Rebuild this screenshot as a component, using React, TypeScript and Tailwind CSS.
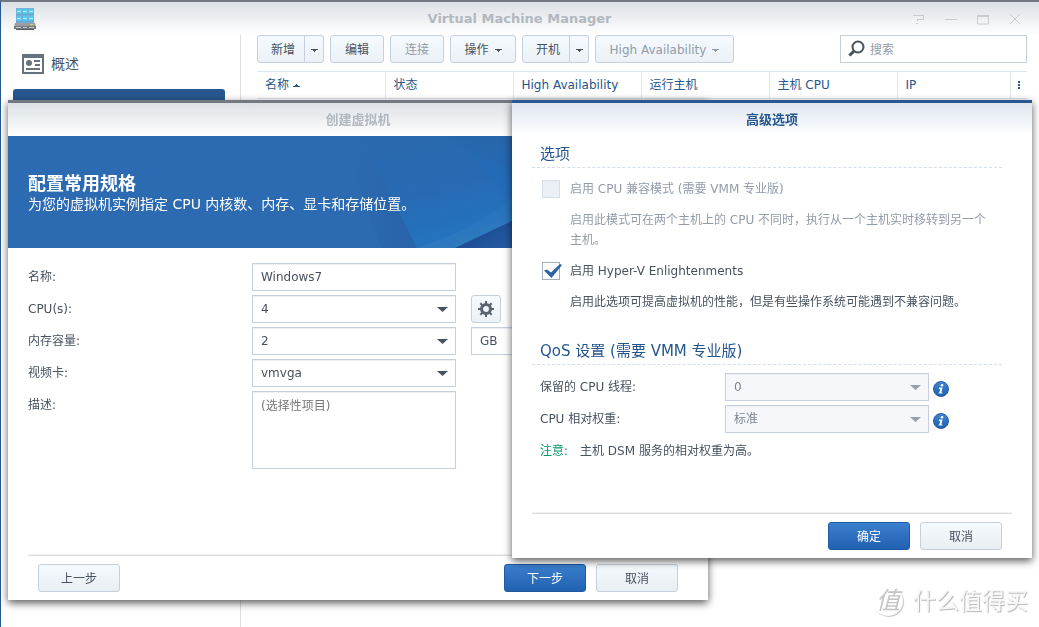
import { useState } from 'react';
import type { ReactNode } from 'react';

const columns = ['名称', '状态', 'High Availability', '运行主机', '主机 CPU', 'IP'];

const toolButton =
  'h-7 rounded-[3px] border border-[#c6d0dd] bg-linear-to-b from-[#f5fafe] to-[#ebf1f6] pt-0.5 text-[#47525f]';
const disabledButton =
  'h-7 rounded-[3px] border border-[#c6d0dd] bg-linear-to-b from-[#f5fafe] to-[#ebf1f6] pt-0.5 text-[#929ca9]';
const field =
  'h-7 w-full appearance-none border border-[#c6d0dd] bg-white px-2 text-[#47525f] shadow-[inset_0_1px_0_#edf1f5] outline-none';

function Caret({ up = false }: { up?: boolean }) {
  return (
    <svg width="7" height="3" viewBox="0 0 7 3" fill="currentColor" shapeRendering="crispEdges" aria-hidden="true">
      <path d={up ? 'M3 0h1v1h1v1h2v1H0V2h2V1h1z' : 'M0 0h7v1H5v1H4v1H3V2H2V1H0z'} />
    </svg>
  );
}

function SplitButton({ label }: { label: string }) {
  return (
    <div className="flex">
      <button type="button" className={`${toolButton} w-12 rounded-r-none pl-1`}>{label}</button>
      <button
        type="button"
        aria-label={`${label}菜单`}
        className={`${toolButton} flex w-[19px] items-center justify-center rounded-l-none border-l-0`}
      >
        <Caret />
      </button>
    </div>
  );
}

function Dropdown({ id, value, disabled = false }: { id: string; value: string; disabled?: boolean }) {
  return (
    <div className="relative w-[204px]">
      <select
        id={id}
        defaultValue={value}
        disabled={disabled}
        className={`${field} block disabled:bg-[#f5f7fa] disabled:text-[#7d858e] disabled:opacity-100`}
      >
        <option>{value}</option>
      </select>
      <svg
        width="11"
        height="5"
        viewBox="0 0 11 5"
        aria-hidden="true"
        className={`pointer-events-none absolute top-3 right-2 ${disabled ? 'text-[#98a0aa]' : 'text-[#47525f]'}`}
      >
        <path d="M0 0h11L5.5 5z" fill="currentColor" />
      </svg>
    </div>
  );
}

function CheckBox({ id, label, defaultChecked = false, disabled = false }: {
  id: string;
  label: string;
  defaultChecked?: boolean;
  disabled?: boolean;
}) {
  const [checked, setChecked] = useState(defaultChecked);
  return (
    <div className="flex items-center gap-2.5">
      <div className="relative size-[18px]">
        <input
          id={id}
          type="checkbox"
          checked={checked}
          disabled={disabled}
          onChange={e => setChecked(e.target.checked)}
          className="block size-[18px] appearance-none border border-[#a4afbc] bg-white disabled:border-[#d5dfe9] disabled:bg-[#eaf0f5]"
        />
        {checked && (
          <svg width="20" height="18" viewBox="0 0 20 18" aria-hidden="true" className="pointer-events-none absolute top-0 left-0">
            <path d="M2 8.5 5 7.5 9 10.5 18 2 20 3 9.5 16z" fill="#2a63a8" />
          </svg>
        )}
      </div>
      <label htmlFor={id} className={disabled ? 'text-[#929ca9]' : 'text-[#47525f]'}>{label}</label>
    </div>
  );
}

function InfoButton({ label }: { label: string }) {
  return (
    <button
      type="button"
      aria-label={label}
      className="mt-1 ml-1 flex size-4 items-center justify-center rounded-full border border-[#205ca6] bg-linear-to-b from-[#3e84d2] to-[#2060b0]"
    >
      <svg width="6" height="10" viewBox="0 0 6 10" fill="#fff" aria-hidden="true">
        <circle cx="4" cy="1.3" r="1.3" />
        <path d="M1 3.5h3.6L3.4 8.4h1.2L4.3 9.5H.6L.9 8.4h.5l.8-3.7H.8z" />
      </svg>
    </button>
  );
}

function FooterButton({ children, primary = false }: { children: ReactNode; primary?: boolean }) {
  return (
    <button
      type="button"
      className={
        primary
          ? 'h-7 w-[82px] rounded-[3px] border border-[#1f5aa3] bg-linear-to-b from-[#3b7fcd] to-[#2161b1] pt-0.5 text-white'
          : 'h-7 w-[82px] rounded-[3px] border border-[#c6d0dd] bg-linear-to-b from-[#f5fafe] to-[#e8eef2] pt-0.5 text-[#47525f]'
      }
    >
      {children}
    </button>
  );
}

function Section({ title }: { title: string }) {
  return (
    <h3 className="h-7 border-b border-dashed border-[#d3dee9] px-2 text-[15px] leading-7 text-[#24568f]">
      {title}
    </h3>
  );
}

function BannerArt() {
  return (
    <svg
      viewBox="0 0 700 112"
      preserveAspectRatio="xMinYMin slice"
      aria-hidden="true"
      className="absolute inset-0 size-full"
    >
      <defs>
        <linearGradient id="fold" x1="0" x2="1" y1="0" y2="0">
          <stop offset="0" stopColor="#2c6bb2" />
          <stop offset="1" stopColor="#2963a9" />
        </linearGradient>
        <linearGradient id="sheet" gradientUnits="userSpaceOnUse" x1="400" x2="430" y1="0" y2="112">
          <stop offset="0" stopColor="#2a68af" />
          <stop offset="0.5" stopColor="#276ab3" />
          <stop offset="1" stopColor="#2474c0" />
        </linearGradient>
        <linearGradient id="corner" gradientUnits="userSpaceOnUse" x1="500" x2="480" y1="0" y2="65">
          <stop offset="0" stopColor="#2964a9" />
          <stop offset="1" stopColor="#1f70bf" />
        </linearGradient>
        <linearGradient id="glow" gradientUnits="userSpaceOnUse" x1="470" x2="480" y1="60" y2="100">
          <stop offset="0" stopColor="#2b77be" stopOpacity="0" />
          <stop offset="1" stopColor="#2f79be" />
        </linearGradient>
        <linearGradient id="deep" gradientUnits="userSpaceOnUse" x1="470" x2="490" y1="90" y2="120">
          <stop offset="0" stopColor="#1c4991" />
          <stop offset="1" stopColor="#255da3" />
        </linearGradient>
      </defs>
      <path d="M0 0h700v112H0z" fill="#2c6bb2" />
      <path d="M333 0h20l56 112h-36z" fill="url(#fold)" />
      <path d="M353 0h347v112H409z" fill="url(#sheet)" />
      <path d="M444 0h256v112H564L504 62z" fill="url(#corner)" />
      <path d="M409 112Q470 92 504 62l60 50z" fill="url(#glow)" />
      <path d="M447 112 504 85 560 58H700v54z" fill="url(#deep)" />
    </svg>
  );
}

function AppIcon() {
  return (
    <svg width="22" height="24" viewBox="0 0 22 24" aria-hidden="true">
      <path d="M2 1h18v16H2z" fill="#70b4dc" />
      {[3, 9, 15].map(x =>
        [2, 9].map(y => (
          <g key={`${x}-${y}`}>
            <rect x={x} y={y} width="4" height="5" fill="#59c9ec" />
            <path d={`M${x} ${y + 2.5}h4`} stroke="#a6f1f8" />
          </g>
        ))
      )}
      <path d="M2 7.5h18M2 14.5h18" stroke="#5fa3d0" />
      <path d="M1 16h20l1 4H0z" fill="#9b9da0" />
      <path d="M0 19h22v3H0z" fill="#777b80" />
      <path d="M2 20.5h5m2 0h4m2 0h5" stroke="#c5c8ca" />
      <path d="M2 22h18v1H2z" fill="#555a60" />
      <path d="M16 17.5h3" stroke="#d4d27d" />
    </svg>
  );
}

function TitleBarControls() {
  const shapes = [
    { name: '帮助', d: 'M0 3.5h11M10.5 3v4.5M11 7.5H4M4.5 7v2M3 11.5h2' },
    { name: '最小化', d: 'M0 7.5h12' },
    { name: '最大化', d: 'M.5 3v9h11V3M0 3.5h12M0 4.5h12' },
    { name: '关闭', d: 'M1 2l10 10M11 2 1 12' },
  ];
  return (
    <div className="flex flex-1 justify-end gap-5 pr-[18px]">
      {shapes.map(s => (
        <button key={s.name} type="button" aria-label={s.name}>
          <svg width="12" height="14" viewBox="0 0 12 14" fill="none" stroke="#c8cbd0">
            <path d={s.d} />
          </svg>
        </button>
      ))}
    </div>
  );
}

function WizardDialog() {
  return (
    <section
      role="dialog"
      aria-labelledby="wizard-title"
      className="absolute top-[100px] left-2 flex h-[500px] w-[700px] flex-col border-t-3 border-[#737881] bg-white shadow-[0_3px_8px_rgba(0,0,0,0.65)]"
    >
      <h2
        id="wizard-title"
        className="h-[33px] bg-linear-to-b from-[#dce0e5] to-white pt-px text-center text-[13px] leading-8 font-bold text-[#b2b8c0]"
      >
        创建虚拟机
      </h2>
      <div className="relative flex h-28 flex-col justify-center bg-[#2c6bb2] px-5 pt-1 text-white">
        <BannerArt />
        <div className="relative">
          <p className="text-lg leading-5 font-bold">配置常用规格</p>
          <p className="text-sm leading-5">为您的虚拟机实例指定 CPU 内核数、内存、显卡和存储位置。</p>
        </div>
      </div>
      <form className="flex flex-1 flex-col gap-1 px-5 pt-[15px]">
        <div className="flex items-center">
          <label htmlFor="vm-name" className="w-56">名称:</label>
          <div className="w-[204px]">
            <input id="vm-name" type="text" defaultValue="Windows7" className={field} />
          </div>
        </div>
        <div className="flex items-center">
          <label htmlFor="vm-cpu" className="w-56">CPU(s):</label>
          <Dropdown id="vm-cpu" value="4" />
          <button
            type="button"
            aria-label="高级选项"
            className="ml-[15px] flex h-7 w-[30px] items-center justify-center rounded-[3px] border border-[#c6d0dd] bg-linear-to-b from-[#f5fafe] to-[#ebf1f6]"
          >
            <svg width="16" height="16" viewBox="0 0 16 16" fill="none" stroke="#59646f" aria-hidden="true">
              <circle cx="8" cy="8" r="4.5" strokeWidth="3" />
              <path
                d="M8 0v3M8 13v3M0 8h3M13 8h3M2.3 2.3l2 2M11.7 11.7l2 2M13.7 2.3l-2 2M4.3 11.7l-2 2"
                strokeWidth="2"
              />
            </svg>
          </button>
        </div>
        <div className="flex items-center">
          <label htmlFor="vm-memory" className="w-56">内存容量:</label>
          <Dropdown id="vm-memory" value="2" />
          <div className="ml-[15px] w-20">
            <select aria-label="单位" className={`${field} block`}>
              <option>GB</option>
            </select>
          </div>
        </div>
        <div className="flex items-center">
          <label htmlFor="vm-video" className="w-56">视频卡:</label>
          <Dropdown id="vm-video" value="vmvga" />
        </div>
        <div className="flex items-start">
          <label htmlFor="vm-desc" className="w-56 leading-7">描述:</label>
          <textarea
            id="vm-desc"
            placeholder="(选择性项目)"
            className="h-[78px] w-[204px] resize-none border border-[#c6d0dd] px-2 py-1 leading-5 shadow-[inset_0_1px_0_#edf1f5] outline-none placeholder:text-[#777]"
          />
        </div>
      </form>
      <footer className="mx-5 flex gap-2.5 border-t border-[#d9dbde] px-2.5 py-2 shadow-[0_-1px_0_#f1f2f3]">
        <FooterButton>上一步</FooterButton>
        <div className="flex-1" />
        <FooterButton primary>下一步</FooterButton>
        <FooterButton>取消</FooterButton>
      </footer>
    </section>
  );
}

function AdvancedDialog() {
  return (
    <section
      role="dialog"
      aria-labelledby="advanced-title"
      className="absolute top-[100px] right-[7px] flex h-[458px] w-[520px] flex-col border-t-3 border-[#28588f] bg-white shadow-[0_3px_8px_rgba(0,0,0,0.65)]"
    >
      <h2
        id="advanced-title"
        className="h-[33px] bg-linear-to-b from-[#dfe6f0] to-white pt-px text-center text-[13px] leading-8 font-bold text-[#24568f]"
      >
        高级选项
      </h2>
      <form className="flex flex-1 flex-col pt-1 pr-[30px] pl-5">
        <Section title="选项" />
        <div className="px-2.5 pt-3">
          <CheckBox id="cpu-compat" label="启用 CPU 兼容模式 (需要 VMM 专业版)" disabled />
          <p className="mt-3 pl-7 leading-5 text-[#929ca9]">
            启用此模式可在两个主机上的 CPU 不同时，执行从一个主机实时移转到另一个主机。
          </p>
          <div className="mt-3">
            <CheckBox id="hyper-v" label="启用 Hyper-V Enlightenments" defaultChecked />
          </div>
          <p className="mt-3 mb-[25px] pl-7 leading-5">启用此选项可提高虚拟机的性能，但是有些操作系统可能遇到不兼容问题。</p>
        </div>
        <Section title="QoS 设置 (需要 VMM 专业版)" />
        <div className="mt-2 flex flex-col gap-1 pl-2">
          <div className="flex items-center">
            <label htmlFor="cpu-threads" className="w-[185px]">保留的 CPU 线程:</label>
            <Dropdown id="cpu-threads" value="0" disabled />
            <InfoButton label="CPU 线程说明" />
          </div>
          <div className="flex items-center">
            <label htmlFor="cpu-weight" className="w-[185px]">CPU 相对权重:</label>
            <Dropdown id="cpu-weight" value="标准" disabled />
            <InfoButton label="CPU 权重说明" />
          </div>
          <p className="flex gap-3 leading-7">
            <span className="text-[#00966b]">注意:</span>
            <span>主机 DSM 服务的相对权重为高。</span>
          </p>
        </div>
      </form>
      <footer className="mx-5 flex justify-end gap-2.5 border-t border-[#d9dbde] px-2.5 py-2 shadow-[0_-1px_0_#f1f2f3]">
        <FooterButton primary>确定</FooterButton>
        <FooterButton>取消</FooterButton>
      </footer>
    </section>
  );
}

export default function App() {
  return (
    <div className="relative flex h-screen flex-col overflow-hidden border-t-2 border-l border-t-[#737881] border-l-[#28588f] bg-white font-['DejaVu_Sans','Noto_Sans_CJK_SC',sans-serif] text-xs text-[#47525f]">
      <header className="flex h-[33px] shrink-0 items-center bg-linear-to-b from-[#dce0e5] to-white">
        <div className="flex-1 pl-[13px]">
          <AppIcon />
        </div>
        <h1 className="pl-1 text-[13px] font-bold text-[#b2b8c0]">Virtual Machine Manager</h1>
        <TitleBarControls />
      </header>

      <div className="flex flex-1">
        <nav className="w-60 border-r border-[#dcdfe2] pt-4 pr-[15px] pl-3">
          <a href="#overview" className="flex h-[26px] items-center gap-[7px] pl-[9px] text-sm">
            <svg width="22" height="20" viewBox="0 0 22 20" aria-hidden="true">
              <path d="M0 0h22v20H0z" fill="#68717e" />
              <path d="M2 4h18v14H2z" fill="#fff" />
              <circle cx="7" cy="9" r="3" fill="#68717e" />
              <path d="M12 7h6M13 11h5M4 15h14" stroke="#68717e" strokeWidth="2" />
            </svg>
            概述
          </a>
          <div className="mt-3 h-9 rounded-[3px] bg-[#28588f]" />
        </nav>

        <main className="min-w-0 flex-1 pr-3 pl-4">
          <div className="flex items-center gap-1.5">
            <SplitButton label="新增" />
            <button type="button" className={`${toolButton} w-[54px]`}>编辑</button>
            <button type="button" disabled className={`${disabledButton} w-[54px]`}>连接</button>
            <button type="button" className={`${toolButton} flex w-[66px] items-center justify-center gap-1.5`}>
              操作 <Caret />
            </button>
            <SplitButton label="开机" />
            <button type="button" disabled className={`${disabledButton} flex w-[139px] items-center justify-center gap-1.5`}>
              High Availability <Caret />
            </button>
            <div className="relative ml-auto w-[187px]">
              <input
                type="search"
                aria-label="搜索"
                placeholder="搜索"
                className="block h-7 w-full appearance-none border border-[#c3ced8] pt-0.5 pr-2 pl-[29px] outline-none placeholder:text-[#929ca9]"
              />
              <svg width="17" height="17" viewBox="0 0 17 17" fill="none" stroke="#47525f" aria-hidden="true" className="pointer-events-none absolute top-[5px] left-2">
                <circle cx="10" cy="7" r="5.5" strokeWidth="2" />
                <path d="M6 11 1.5 15.5" strokeWidth="3" />
              </svg>
            </div>
          </div>

          <table className="mt-2 w-full table-fixed border-y border-[#dde5ed] text-left text-[#24568f]">
            <thead>
              <tr className="h-[27px]">
                {columns.map((col, i) => (
                  <th key={col} className={`border-r border-[#dde5ed] px-2 font-normal ${i < 5 ? 'w-32' : ''}`}>
                    <span className="flex items-center gap-1">
                      {col}
                      {i === 0 && <Caret up />}
                    </span>
                  </th>
                ))}
                <th className="w-[17px]">
                  <button type="button" aria-label="列" className="flex w-full justify-center">
                    <svg width="2" height="8" viewBox="0 0 2 8" fill="currentColor" aria-hidden="true">
                      <path d="M0 0h2v2H0zM0 3h2v2H0zM0 6h2v2H0z" />
                    </svg>
                  </button>
                </th>
              </tr>
            </thead>
          </table>
        </main>
      </div>

      {/* floating windows over the main one */}
      <div className="pointer-events-none fixed inset-0">
        <div className="pointer-events-auto">
          <WizardDialog />
          <AdvancedDialog />
        </div>
        <div className="absolute right-[11px] bottom-2 flex items-center gap-2.5 text-[#f7f7f7] [text-shadow:1px_1px_1px_#b5b5b5]">
          <span className="flex size-[30px] items-center justify-center rounded-full text-2xl text-[#c4c4c4] italic shadow-[1px_1px_1px_#c4c4c4] [text-shadow:none]">
            值
          </span>
          <span className="text-[23px] leading-9">什么值得买</span>
        </div>
      </div>
    </div>
  );
}
